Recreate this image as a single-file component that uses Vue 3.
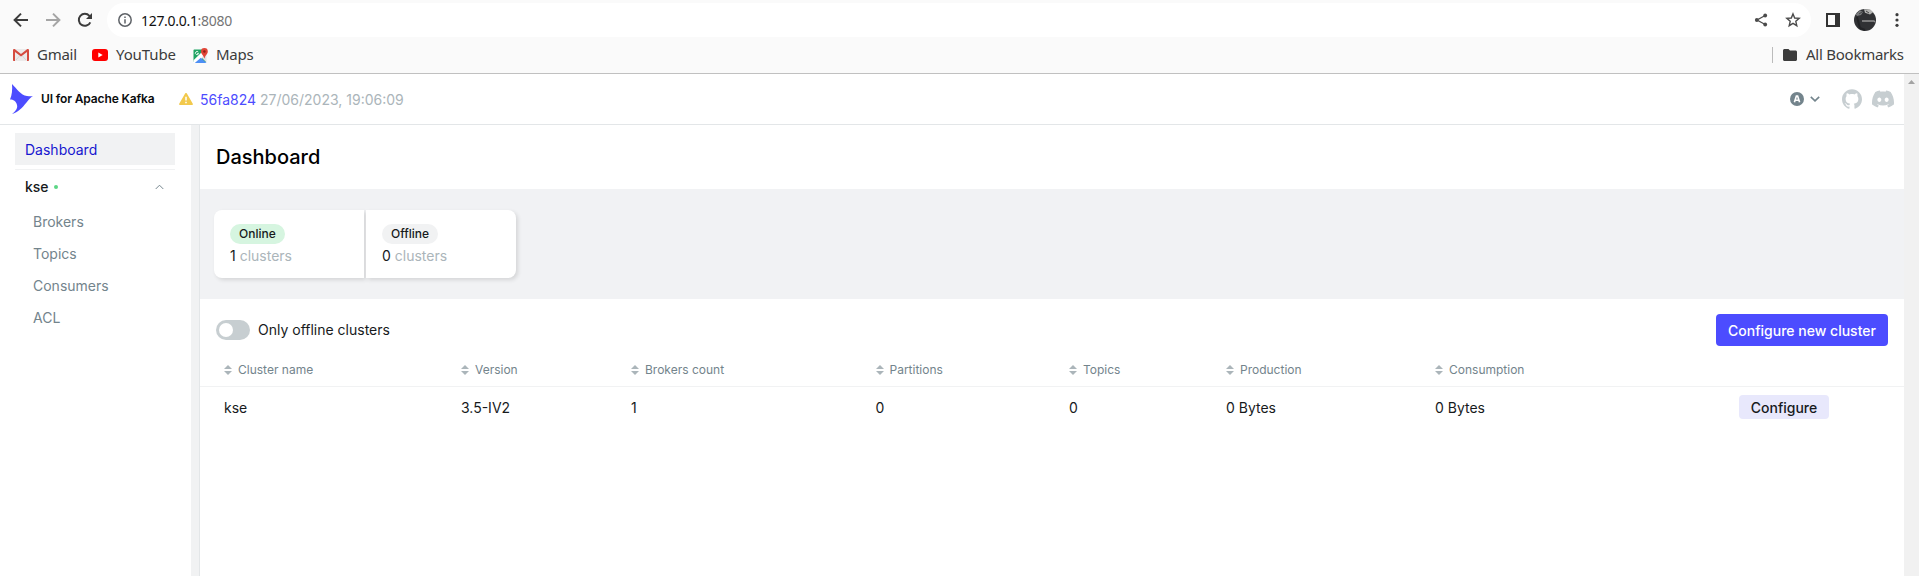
<script setup>
const columns = [
  { title: 'Cluster name', value: 'kse' },
  { title: 'Version', value: '3.5-IV2' },
  { title: 'Brokers count', value: '1' },
  { title: 'Partitions', value: '0' },
  { title: 'Topics', value: '0' },
  { title: 'Production', value: '0 Bytes' },
  { title: 'Consumption', value: '0 Bytes' },
]
const links = ['Brokers', 'Topics', 'Consumers', 'ACL']
const metrics = [
  { label: 'Online', count: 1, tone: 'green' },
  { label: 'Offline', count: 0, tone: 'gray' },
]
</script>

<template>
  <div class="window">
    <div class="chrome">
      <div class="toolbar">
        <svg class="nav-icon" viewBox="0 0 16 16"><path d="M15 8H2M8 1.6 1.6 8 8 14.4" /></svg>
        <svg class="nav-icon dim" viewBox="0 0 16 16"><path d="M1 8h13M8 1.6 14.4 8 8 14.4" /></svg>
        <svg class="nav-icon" viewBox="0 0 16 16">
          <path d="M13.3 10.3A6 6 0 1 1 12.4 3.9L14 5.5" />
          <path class="solid" d="M15 1v6H9z" />
        </svg>
        <div class="address">
          <svg class="info" viewBox="0 0 14 14">
            <circle cx="7" cy="7" r="6.2" /><path d="M7 6.2v4.3M7 3.4v1.5" />
          </svg>
          <span class="url">127.0.0.1<span class="port">:8080</span></span>
          <svg class="share" viewBox="0 0 14 14">
            <path d="M11.2 2.5 3 7l8.2 4.5" />
            <circle cx="11.2" cy="2.5" r="1.9" /><circle cx="2.8" cy="7" r="1.9" /><circle cx="11.2" cy="11.5" r="1.9" />
          </svg>
          <svg class="star" viewBox="0 0 16 16">
            <path d="M8 1.9 9.7 6l4.5.4-3.4 2.9 1 4.4L8 11.4l-3.8 2.3 1-4.4L1.8 6.4 6.300 6z" />
          </svg>
        </div>
        <svg class="panel" viewBox="0 0 14 14"><path fill-rule="evenodd" d="M0 0h14v14H0zM2 2v10h7V2z" /></svg>
        <svg class="avatar" viewBox="0 0 22 22">
          <circle cx="11" cy="11" r="11" fill="#303134" />
          <path d="M1.700 5.200 6 1.200 9 3 7 6 3 7z" fill="#77797b" />
          <path d="M10 .2h6l3 3-3 2.200-5-1.600z" fill="#b4b4b3" />
          <path d="M12 2l3 2M5 5l3-2" stroke="#444" />
          <path d="M8 12h12l1 1" fill="none" stroke="#929293" stroke-width="1.300" />
          <path d="M3 8l3 11 5 2" fill="none" stroke="#222326" stroke-width="2" />
        </svg>
        <svg class="dots" viewBox="0 0 4 14"><circle cx="2" cy="1.700" r="1.600" /><circle cx="2" cy="7" r="1.600" /><circle cx="2" cy="12.300" r="1.600" /></svg>
      </div>
      <div class="bookmarks">
        <svg class="gmail" viewBox="0 0 16 12">
          <path fill="#eceaea" d="M1 0h14v12H1z" />
          <path fill="none" stroke="#c9c5c5" stroke-width=".6" d="M3 11l4-4.500M13 11 9 6.500" />
          <path fill="#d54b3f" d="M0 1.200C0 0 1.300-.3 2 .3L8 5l6-4.700c.7-.6 2-.3 2 .9V11c0 .6-.4 1-1 1h-1V3L8 7.600 2 3v9H1c-.6 0-1-.4-1-1z" />
        </svg>
        <span class="bm gm">Gmail</span>
        <svg class="yt" viewBox="0 0 16 12"><rect width="16" height="12" rx="3" fill="#f00" /><path fill="#fff" d="M6.300 3.500v5L10.700 6z" /></svg>
        <span class="bm ytt">YouTube</span>
        <svg class="maps" viewBox="0 0 15 15">
          <path fill="#1fa463" d="M1.500 1.500H13V14H1.500C.7 14 .5 13.500.5 13V2.500c0-.6.4-1 1-1z" />
          <path fill="#fff" d="M.5 12.200 10 3l3.500 3L4 15H.5z" />
          <path fill="#dfe2e5" d="m8.500 9.500 5-4.500v9.500z" />
          <path fill="#4e8ff5" d="M1.800 15l6-5.300 5.700 5.300z" />
          <path fill="none" stroke="#fff" stroke-width=".9" d="M5.300 4.100A1.600 1.600 0 1 0 5.600 5.500H4.200" />
          <path fill="#e04436" d="M11.400 0A3.400 3.400 0 0 1 14.800 3.400c0 2.600-2.600 3.500-3.200 6.800h-.4C10.600 6.900 8 6 8 3.400A3.400 3.400 0 0 1 11.400 0z" />
          <circle cx="11.400" cy="3.500" r="1.200" fill="#8c1f14" />
        </svg>
        <span class="bm mp">Maps</span>
        <div class="all">
          <svg class="folder" viewBox="0 0 14 12"><path d="M1.500 0h4L7 1.500h5.500c.8 0 1.500.6 1.500 1.400v7.600c0 .8-.7 1.500-1.500 1.500h-11C.7 12 0 11.300 0 10.500v-9C0 .7.7 0 1.500 0z" /></svg>
          <span class="bm ab">All Bookmarks</span>
        </div>
      </div>
    </div>

    <div class="viewport">
      <div class="app">
        <header class="header">
          <svg class="logo" viewBox="0 0 23 30"><path d="M2 0C7 5 10.500 11 17 12c2.500.4 4.500.4 6 .1-2.600 1.600-4.200 3.500-6.500 6.400C12.500 23.500 8 28.500 2 30c3.500-2.600 6-6 5-9C6 17 3.500 15.500 0 15.500 2 11 2.500 6 2 0z" /></svg>
          <span class="brand">UI for Apache Kafka</span>
          <svg class="warn" viewBox="0 0 14 12"><path fill="#f2c94c" d="M6.100.5a1 1 0 0 1 1.800 0l5.900 10.200c.4.600 0 1.300-.800 1.300H1c-.8 0-1.200-.7-.8-1.300z" /><path stroke="#fff" stroke-width="1.500" d="M7 3.800v3.600M7 8.700v1.500" /></svg>
          <span class="version"><a>56fa824</a> 27/06/2023, 19:06:09</span>
          <div class="tools">
            <svg class="auto" viewBox="0 0 14 14"><circle cx="7" cy="7" r="7" fill="#73848c" /><path fill="none" stroke="#fff" stroke-width="1.600" d="M4.400 10.300 6.400 4h1.200l2 6.300M5.300 8.300h3.400" /></svg>
            <svg class="down" viewBox="0 0 10 6"><path d="M.8.800 5 4.800 9.200.8" /></svg>
            <svg class="github" viewBox="0 0 24 24"><path d="M12 .297c-6.630 0-12 5.373-12 12 0 5.303 3.438 9.800 8.205 11.385.6.113.82-.258.82-.577 0-.285-.01-1.040-.015-2.040-3.338.724-4.042-1.610-4.042-1.610C4.422 18.070 3.633 17.700 3.633 17.700c-1.087-.744.084-.729.084-.729 1.205.084 1.838 1.236 1.838 1.236 1.070 1.835 2.809 1.305 3.495.998.108-.776.417-1.305.76-1.605-2.665-.3-5.466-1.332-5.466-5.930 0-1.310.465-2.380 1.235-3.220-.135-.303-.54-1.523.105-3.176 0 0 1.005-.322 3.300 1.230.96-.267 1.980-.399 3-.405 1.020.006 2.040.138 3 .405 2.280-1.552 3.285-1.230 3.285-1.230.645 1.653.24 2.873.12 3.176.765.84 1.230 1.910 1.230 3.220 0 4.610-2.805 5.625-5.475 5.920.42.36.81 1.096.81 2.220 0 1.606-.015 2.896-.015 3.286 0 .315.21.69.825.57C20.565 22.092 24 17.592 24 12.297c0-6.627-5.373-12-12-12" /></svg>
            <svg class="discord" viewBox="0 2.700 24 18.600"><path d="M20.317 4.370a19.790 19.790 0 0 0-4.885-1.515.074.074 0 0 0-.079.037c-.211.375-.445.865-.608 1.250-1.845-.276-3.680-.276-5.487 0-.164-.393-.406-.874-.618-1.250a.077.077 0 0 0-.079-.037A19.736 19.736 0 0 0 3.677 4.370a.07.07 0 0 0-.032.028C.533 9.046-.319 13.580.099 18.058a.082.082 0 0 0 .031.056c2.053 1.508 4.041 2.423 5.993 3.029a.078.078 0 0 0 .084-.028c.462-.63.873-1.295 1.226-1.994a.076.076 0 0 0-.042-.106c-.653-.248-1.274-.55-1.872-.892a.077.077 0 0 1-.008-.128c.126-.094.252-.192.372-.291a.074.074 0 0 1 .078-.011c3.928 1.793 8.180 1.793 12.061 0a.074.074 0 0 1 .079.010c.12.099.246.198.373.292a.077.077 0 0 1-.007.128c-.598.343-1.220.645-1.873.891a.077.077 0 0 0-.041.107c.36.698.772 1.363 1.225 1.993a.076.076 0 0 0 .084.029c1.961-.607 3.950-1.522 6.002-3.030a.077.077 0 0 0 .031-.055c.5-5.177-.838-9.674-3.549-13.660a.061.061 0 0 0-.031-.029zM8.020 15.331c-1.183 0-2.157-1.086-2.157-2.419s.956-2.419 2.157-2.419c1.211 0 2.176 1.095 2.157 2.419 0 1.333-.956 2.419-2.157 2.419zm7.975 0c-1.183 0-2.157-1.086-2.157-2.419s.956-2.419 2.157-2.419c1.211 0 2.176 1.095 2.157 2.419 0 1.333-.946 2.419-2.157 2.419z" /></svg>
          </div>
        </header>

        <div class="body">
          <aside class="sidebar">
            <nav class="menu">
              <div class="item active">Dashboard</div>
              <div class="cluster">
                <span>kse</span><i class="dot"></i>
                <svg class="up" viewBox="0 0 10 6"><path d="M.8 5.200 5 1l4.200 4.200" /></svg>
              </div>
              <div v-for="l in links" :key="l" class="item sub">{{ l }}</div>
            </nav>
          </aside>

          <main class="main">
            <h1 class="title">Dashboard</h1>
            <section class="metrics">
              <div v-for="m in metrics" :key="m.label" class="metric">
                <span class="tag" :class="m.tone">{{ m.label }}</span>
                <div class="count">{{ m.count }} <span>clusters</span></div>
              </div>
            </section>
            <div class="controls">
              <span class="switch"></span>
              <span class="switch-label">Only offline clusters</span>
              <button class="primary">Configure new cluster</button>
            </div>
            <div class="row head">
              <div v-for="c in columns" :key="c.title" class="th">
                <svg class="sort" viewBox="0 0 8 10"><path d="M4 0l4 4H0zM0 6h8l-4 4z" /></svg>
                <span>{{ c.title }}</span>
              </div>
            </div>
            <div class="row data">
              <div v-for="c in columns" :key="c.title">{{ c.value }}</div>
              <button class="secondary">Configure</button>
            </div>
          </main>
        </div>
      </div>
      <div class="scrollbar"><svg viewBox="0 0 7 4"><path d="M3.500 0 7 4H0z" /></svg></div>
    </div>
  </div>
</template>

<style>
body { overflow: hidden; background: #fff; }
</style>

<style scoped>
* { box-sizing: border-box; }
svg { display: block; flex: none; }
.window { width: 1919px; height: 576px; display: flex; flex-direction: column; overflow: hidden; font-family: Inter, "Liberation Sans", sans-serif; font-size: 14px; color: #171a1c; }
.chrome { height: 74px; flex: none; background: #fafafa; border-bottom: 1px solid #c0c0c0; font-family: "Noto Sans", "Open Sans", sans-serif; color: #3c3c3c; }
.toolbar { height: 37px; padding: 3px 0 0 13px; display: flex; align-items: center; }
.nav-icon { width: 16px; height: 16px; margin-right: 16px; fill: none; stroke: #3c3c3c; stroke-width: 2; }
.nav-icon.dim { stroke: #a5a5a5; }
.nav-icon .solid { fill: #3c3c3c; stroke: none; }
.address { width: 1704px; height: 34px; margin-left: -2px; padding: 0 10px 0 11px; border-radius: 17px; background: #fff; display: flex; align-items: center; }
.info { width: 14px; height: 14px; fill: none; stroke: #5f6368; stroke-width: 1.5; }
.url { margin-left: 9px; font-size: 14px; color: #111; letter-spacing: -0.3px; }
.port { color: #757575; }
.share { width: 14px; height: 14px; margin-left: auto; fill: #4b4b4b; stroke: #4b4b4b; stroke-width: 1.3; }
.share path { fill: none; }
.share circle { stroke: none; }
.star { width: 16px; height: 16px; margin-left: 17px; fill: none; stroke: #4b4b4b; stroke-width: 1.4; }
.panel { width: 14px; height: 14px; margin-left: 15px; fill: #333; }
.avatar { width: 22px; height: 22px; margin-left: 14px; }
.dots { width: 4px; height: 14px; margin-left: 19px; fill: #3c3c3c; }
.bookmarks { height: 36px; padding: 0 15px 0 13px; display: flex; align-items: center; }
.bm { padding-bottom: 2px; font-size: 15px; line-height: 20px; letter-spacing: -0.25px; white-space: nowrap; }
.gmail, .yt { width: 16px; height: 12px; }
.gm { width: 55px; margin-left: 8px; }
.ytt { width: 77px; margin-left: 8px; letter-spacing: -0.1px; }
.maps { width: 15px; height: 15px; }
.mp { margin-left: 8px; }
.all { height: 16px; margin-left: auto; padding-left: 10px; border-left: 1px solid #bbb; display: flex; align-items: center; }
.folder { width: 14px; height: 12px; fill: #3c3c3c; }
.ab { width: 98px; margin-left: 9px; }

.viewport { flex: 1; display: flex; min-height: 0; }
.app { width: 1904px; display: flex; flex-direction: column; }
.scrollbar { width: 15px; background: #f1f1f1; padding: 6px 0 0 4px; }
.scrollbar svg { width: 7px; height: 4px; fill: #a3a3a3; }
.header { height: 51px; flex: none; padding: 0 10px; display: flex; align-items: center; border-bottom: 1px solid #e3e6e8; }
.logo { width: 23px; height: 30px; fill: #4c4cff; }
.brand { width: 138px; margin: -2px 0 0 8px; font-size: 12px; font-weight: 600; letter-spacing: -0.13px; color: #0b0d0e; white-space: nowrap; }
.warn { width: 14px; height: 12px; }
.version { margin-left: 7px; color: #abb5ba; }
.version a { color: #4c4cff; }
.tools { margin-left: auto; display: flex; align-items: center; }
.auto { width: 14px; height: 14px; }
.down { width: 10px; height: 6px; margin: 0 22px 0 6px; fill: none; stroke: #73848c; stroke-width: 1.6; }
.github { width: 20px; height: 20px; fill: #c7ced1; }
.discord { width: 22px; height: 18px; margin-left: 10px; fill: #c7ced1; }

.body { flex: 1; display: flex; min-height: 0; }
.sidebar { width: 200px; flex: none; background: #f1f2f3; border-right: 1px solid #e3e6e8; }
.menu { width: 191px; height: 100%; padding: 8px 16px 0 15px; background: #fff; }
.item { height: 32px; padding-left: 10px; line-height: 33px; color: #73848c; }
.item.active { background: #f1f2f3; color: #1717cf; }
.item.sub { padding-left: 18px; }
.cluster { height: 36px; margin-top: 4px; padding: 0 11px 2px 10px; border-top: 1px solid #f1f2f3; display: flex; align-items: center; }
.cluster span { font-weight: 500; }
.dot { width: 4px; height: 4px; margin-left: 5px; border-radius: 50%; background: #5cd685; }
.up { width: 9px; height: 6px; margin-left: auto; fill: none; stroke: #73848c; stroke-width: 1.1; }

.main { flex: 1; min-width: 0; }
.title { height: 64px; margin: 0; padding-left: 16px; font-size: 20px; font-weight: 500; line-height: 64px; color: #000; }
.metrics { height: 110px; padding: 21px 14px; display: flex; gap: 2px; background: #f1f2f4; }
.metric { width: 150px; height: 68px; padding: 14px 16px; background: #fff; box-shadow: 2px 2px 4px rgba(0, 0, 0, .12); }
.metric:first-child { border-radius: 8px 0 0 8px; }
.metric:last-child { border-radius: 0 8px 8px 0; }
.tag { display: inline-block; height: 20px; padding: 0 9px; border-radius: 10px; font-size: 12px; font-weight: 500; line-height: 20px; vertical-align: top; }
.tag.green { background: #d6f5e0; }
.tag.gray { background: #f1f2f3; }
.count { padding-top: 2px; line-height: 20px; }
.count span { color: #abb5ba; }
.controls { height: 57px; padding: 15px 16px 0; display: flex; align-items: flex-start; }
.switch { width: 34px; height: 20px; margin-top: 6px; padding: 3px; border-radius: 10px; background: #c7ced1; }
.switch::before { content: ""; display: block; width: 14px; height: 14px; border-radius: 50%; background: #fff; }
.switch-label { margin: 6px 0 0 8px; line-height: 20px; }
button { border: 0; font-family: inherit; font-size: 14px; font-weight: 500; border-radius: 4px; padding: 1px 0 0; white-space: nowrap; }
.primary { width: 172px; height: 32px; margin-left: auto; background: #4c4cff; color: #fff; }
.row { padding-left: 24px; display: grid; grid-template-columns: 237px 170px 244.500px 193.500px 157px 209px 304px 1fr; align-items: center; }
.head { height: 31px; padding-bottom: 3px; border-bottom: 1px solid #f1f2f3; font-size: 12px; color: #73848c; }
.th { display: flex; align-items: center; gap: 6px; }
.sort { width: 8px; height: 10px; fill: #abb5ba; }
.data { height: 40px; }
.secondary { width: 90px; height: 24px; background: #e8e8fc; color: #171a1c; }
</style>
